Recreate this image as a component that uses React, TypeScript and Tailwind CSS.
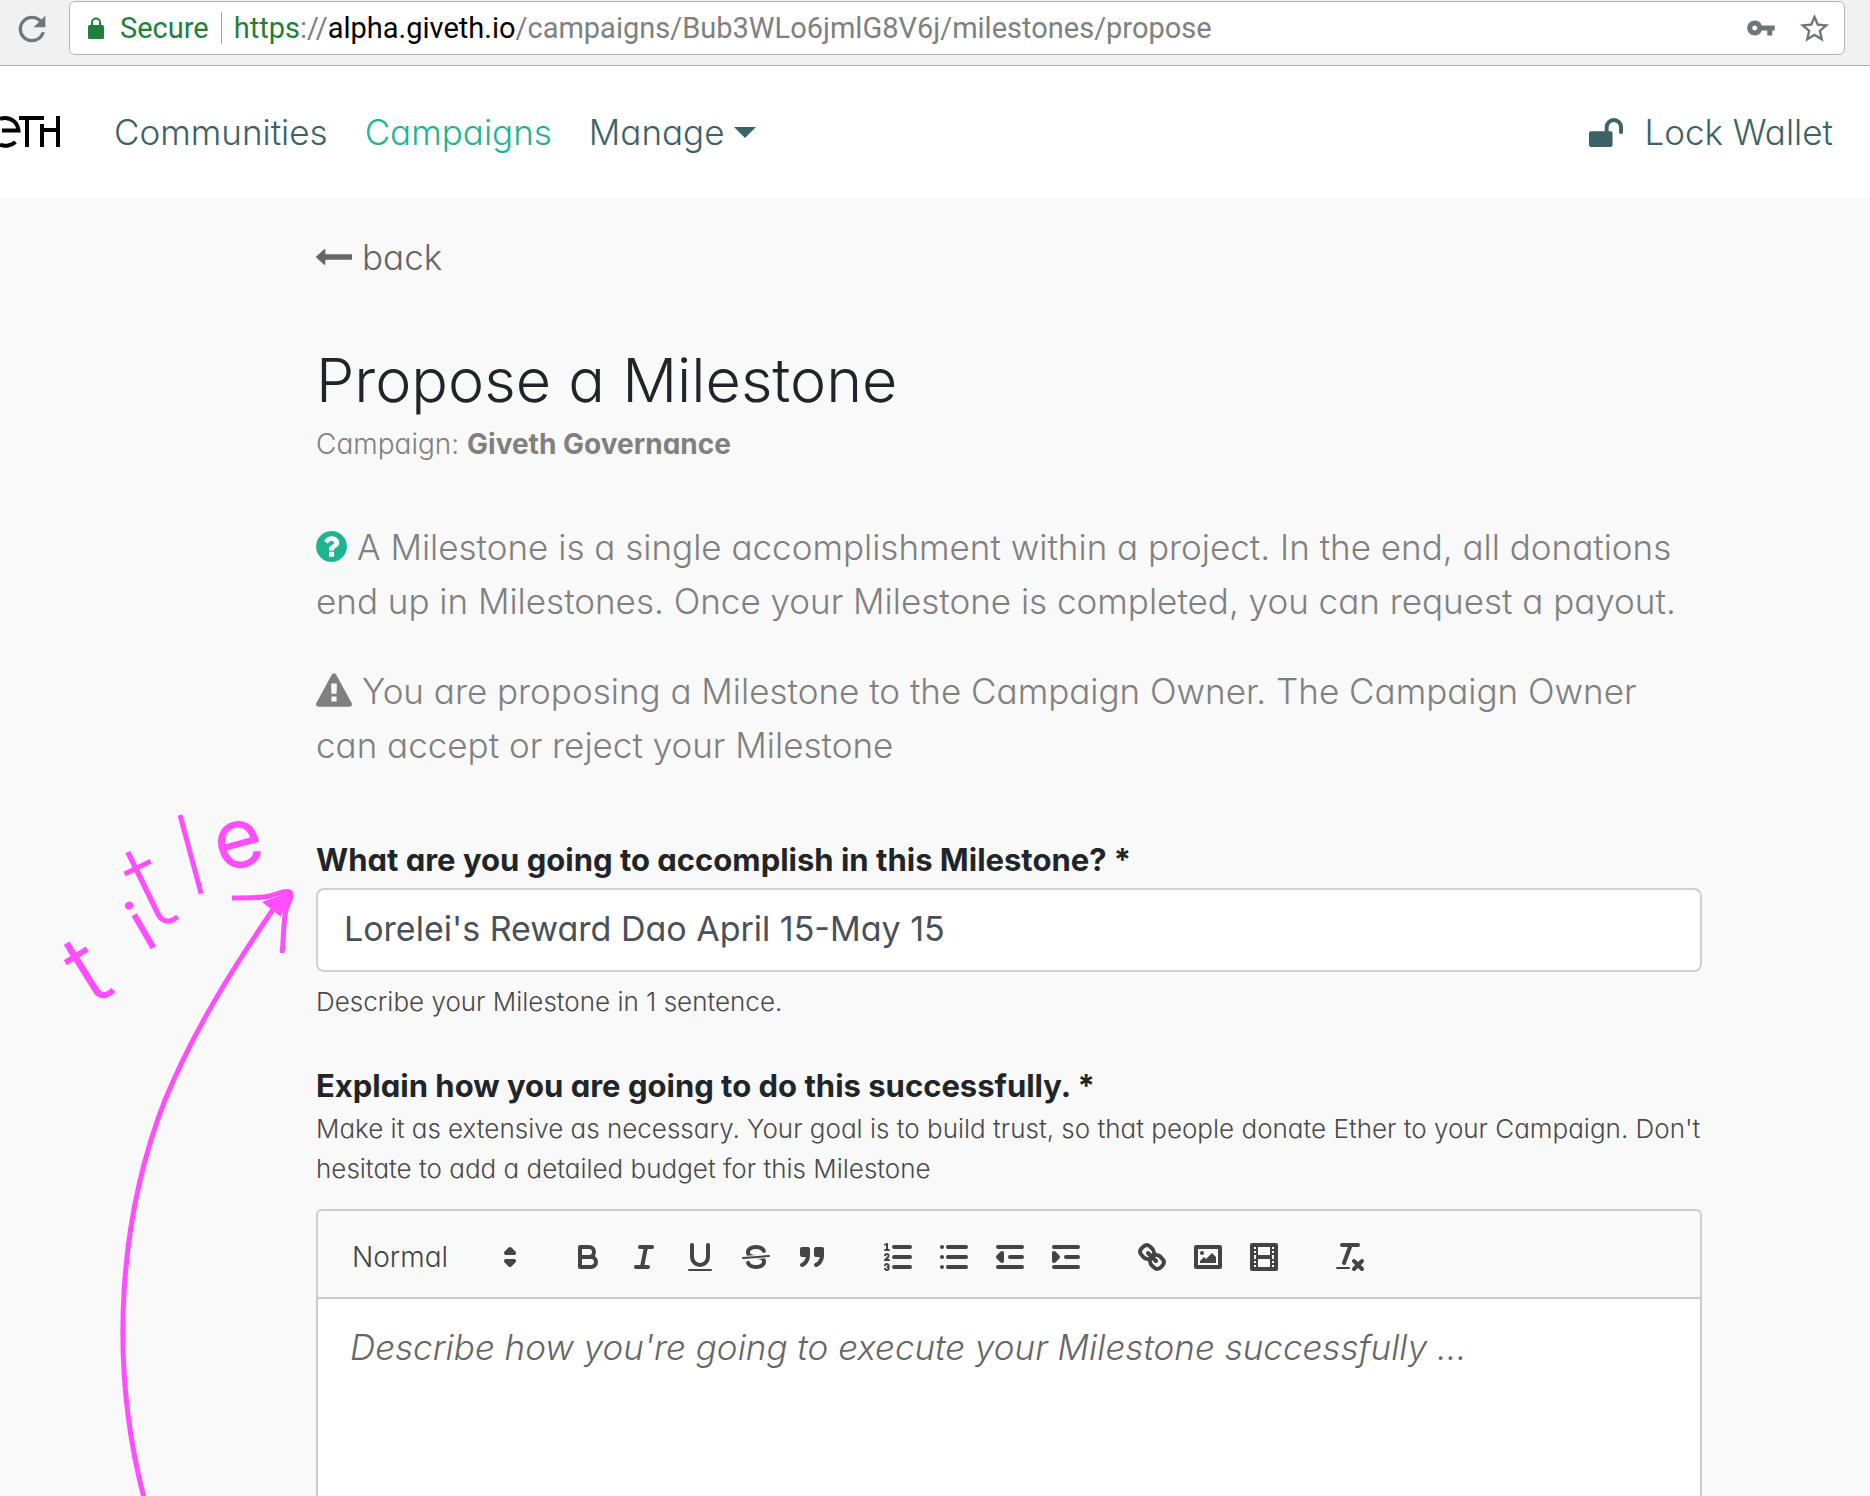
import type { ReactNode } from "react";
import { MdRefresh, MdStarBorder, MdVpnKey } from "react-icons/md";

function BrowserBar() {
  return (
    <div className="flex h-[66px] items-start border-b border-[#b0b0b0] bg-[#f1f1f1] pt-px pr-[25px] pl-3">
      <button aria-label="Reload" className="mt-2 text-[#70757a]">
        <MdRefresh size={40} />
      </button>
      <div className="ml-[17px] flex h-[54px] flex-1 items-center rounded-md border border-[#b4b4b4] bg-white pr-3 pl-[18px] font-['Roboto','Liberation_Sans',sans-serif] text-[29px] whitespace-nowrap">
        <svg viewBox="0 0 16 22" className="h-[22px] w-4" aria-hidden="true">
          <path d="M4 10V5.500A4 4 0 0 1 12 5.500V10" fill="none" stroke="#1f803b" strokeWidth="2" />
          <rect y="8" width="16" height="14" rx="1.500" fill="#1f803b" />
        </svg>
        <span className="ml-4 pt-[2px] text-[#1f803b]">Secure</span>
        <span className="mr-3 ml-3 h-8 w-px bg-[#a5a5a5]" />
        <span className="pt-[2px] text-[#808080]">
          <span className="text-[#1f803b]">https</span>://<span className="text-black">alpha.giveth.io</span>
          /campaigns/Bub3WLo6jmlG8V6j/milestones/propose
        </span>
        <button aria-label="Saved passwords" className="ml-auto text-[#70757a]">
          <MdVpnKey size={30} />
        </button>
        <button aria-label="Bookmark this page" className="ml-[21px] text-[#70757a]">
          <MdStarBorder size={35} />
        </button>
      </div>
    </div>
  );
}

function Logo() {
  return (
    <svg viewBox="0 0 62 34" className="h-[34px] w-[62px]" role="img" aria-label="Giveth">
      <path d="M2 15.5H18.5C17.500 7 11 3 5 3C3 3 1 3.500 0 4M0 29.500C5 32 11.500 30.500 15.500 27" fill="none" stroke="#000" strokeWidth="4" />
      <rect x="19" y="1" width="25" height="4" />
      <rect x="25" y="1" width="4" height="31" />
      <rect x="40" y="9" width="4" height="23" />
      <rect x="40" y="13" width="20" height="4" />
      <rect x="56" y="1" width="4" height="31" />
    </svg>
  );
}

function NavBar() {
  return (
    <nav className="flex h-[132px] items-center bg-white pr-[37px] text-[35px] font-[350] text-[#3d6266]">
      <a href="#home">
        <Logo />
      </a>
      <div className="ml-[52px] flex gap-[37px]">
        <a href="#communities">Communities</a>
        <a href="#campaigns" className="text-[#1eb492]">
          Campaigns
        </a>
        <button className="flex items-center gap-[10px]">
          Manage
          <span className="border-x-[11px] border-t-[11px] border-x-transparent border-t-[#3d6266]" />
        </button>
      </div>
      <button className="ml-auto flex items-center gap-[21px]">
        <svg viewBox="64 128 1664 1408" className="h-[29px] w-[34px] fill-current" aria-hidden="true">
          <path d="M1728 576v256q0 26-19 45t-45 19h-64q-26 0-45-19t-19-45v-256q0-106-75-181t-181-75-181 75-75 181v192h96q40 0 68 28t28 68v576q0 40-28 68t-68 28h-960q-40 0-68-28t-28-68v-576q0-40 28-68t68-28h672v-192q0-185 131.500-316.500t316.500-131.500 316.500 131.500 131.500 316.500z" />
        </svg>
        Lock Wallet
      </button>
    </nav>
  );
}

function Tool({ label, children }: { label: string; children: ReactNode }) {
  return (
    <button aria-label={label} className="flex h-12 w-14 items-center justify-center">
      <svg viewBox="0 0 18 18" className="size-9 fill-none stroke-[#444] stroke-2" strokeLinecap="round" strokeLinejoin="round">
        {children}
      </svg>
    </button>
  );
}

const solid = "fill-[#444] stroke-none";
const both = "fill-[#444]";
const thin = "stroke-1";

function Toolbar() {
  return (
    <div className="flex gap-[30px] border-b-2 border-[#ccc] px-4 pt-[22px] pb-4">
      <button aria-label="Text style" className="flex h-12 w-[196px] items-center justify-between pl-[18px] text-[28px] font-[350] text-[#444]">
        Normal
        <svg viewBox="0 0 18 18" className="mr-[2px] size-9 fill-[#444] stroke-[#444] stroke-2" strokeLinejoin="round">
          <polygon points="7 11 9 13 11 11 7 11" />
          <polygon points="7 7 9 5 11 7 7 7" />
        </svg>
      </button>
      <div className="flex">
        <Tool label="Bold">
          <path d="M5,4H9.5A2.5,2.5,0,0,1,12,6.5v0A2.5,2.5,0,0,1,9.5,9H5V4Z" />
          <path d="M5,9h5.500A2.500,2.500,0,0,1,13,11.500v0A2.500,2.500,0,0,1,10.500,14H5V9Z" />
        </Tool>
        <Tool label="Italic">
          <path d="M7 4H13M5 14H11M8 14L10 4" />
        </Tool>
        <Tool label="Underline">
          <path d="M5,3V9a4.012,4.012,0,0,0,4,4H9a4.012,4.012,0,0,0,4-4V3" />
          <rect className={solid} x="3" y="15" width="12" height="1" rx="0.5" />
        </Tool>
        <Tool label="Strike">
          <path className={thin} d="M15.5 8.5L2.5 9.5" />
          <path className={solid} d="M9.007,8C6.542,7.791,6,7.519,6,6.5,6,5.792,7.283,5,9,5c1.571,0,2.765.679,2.969,1.309a1,1,0,0,0,1.9-.617C13.356,4.106,11.354,3,9,3,6.2,3,4,4.538,4,6.5a3.2,3.2,0,0,0,.5,1.843Z" />
          <path className={solid} d="M8.984,10C11.457,10.208,12,10.479,12,11.5c0,.708-1.283,1.5-3,1.5-1.571,0-2.765-.679-2.969-1.309a1,1,0,1,0-1.9.617C4.644,13.894,6.646,15,9,15c2.8,0,5-1.538,5-3.5a3.2,3.2,0,0,0-.5-1.843Z" />
        </Tool>
        <Tool label="Quote">
          <rect className={both} x="4" y="5" width="3" height="3" />
          <rect className={both} x="11" y="5" width="3" height="3" />
          <path className={both} fillRule="evenodd" d="M7,8c0,4.031-3,5-3,5" />
          <path className={both} fillRule="evenodd" d="M14,8c0,4.031-3,5-3,5" />
        </Tool>
      </div>
      <div className="flex">
        <Tool label="Numbered list">
          <path d="M7 4H15M7 9H15M7 14H15" />
          <path className={thin} d="M2.5 5.5H4.5" />
          <path className={solid} d="M3.5,6A0.5,0.5,0,0,1,3,5.5V3.085l-0.276.138A0.5,0.5,0,0,1,2.053,3c-0.124-.247-0.023-0.324.224-0.447l1-.5A0.5,0.5,0,0,1,4,2.5v3A0.5,0.5,0,0,1,3.5,6Z" />
          <path className={thin} d="M4.5,10.5h-2c0-.234,1.85-1.076,1.85-2.234A0.959,0.959,0,0,0,2.5,8.156" />
          <path className={thin} d="M2.5,14.846a0.959,0.959,0,0,0,1.85-.109A0.7,0.7,0,0,0,3.75,14a0.688,0.688,0,0,0,.6-0.736,0.959,0.959,0,0,0-1.85-.109" />
        </Tool>
        <Tool label="Bullet list">
          <path d="M6 4H15M6 9H15M6 14H15M3 4H3M3 9H3M3 14H3" />
        </Tool>
        <Tool label="Decrease indent">
          <path d="M3 14H15M3 4H15M9 9H15" />
          <polygon className={both} points="5 7 5 11 3 9 5 7" />
        </Tool>
        <Tool label="Increase indent">
          <path d="M3 14H15M3 4H15M9 9H15" />
          <polygon className={both} points="3 7 3 11 5 9 3 7" />
        </Tool>
      </div>
      <div className="flex">
        <Tool label="Link">
          <path d="M7 7L11 11" />
          <path d="M8.900,4.577a3.476,3.476,0,0,1,.360,4.679A3.476,3.476,0,0,1,4.577,8.900C3.185,7.500,2.035,6.400,4.217,4.217S7.500,3.185,8.900,4.577Z" />
          <path d="M13.423,9.100a3.476,3.476,0,0,0-4.679-.360,3.476,3.476,0,0,0,.360,4.679c1.392,1.392,2.500,2.542,4.679.360S14.815,10.500,13.423,9.100Z" />
        </Tool>
        <Tool label="Image">
          <rect x="3" y="4" width="12" height="10" />
          <circle className={solid} cx="6" cy="7" r="1" />
          <polygon className={solid} points="5 12 5 11 7 9 8 10 11 7 13 9 13 12 5 12" />
        </Tool>
        <Tool label="Video">
          <rect x="3" y="3" width="12" height="12" />
          <path className={solid} d="M5 3h1v12h-1zM12 3h1v12h-1zM5 8h8v2h-8zM3 5h3v1h-3zM3 7h3v1h-3zM3 10h3v1h-3zM3 12h3v1h-3zM12 5h3v1h-3zM12 7h3v1h-3zM12 10h3v1h-3zM12 12h3v1h-3z" />
        </Tool>
      </div>
      <Tool label="Clear formatting">
        <path d="M5 3H13M6 12L9.35 3M11 11L15 15M15 11L11 15" />
        <rect className={solid} x="2" y="14" width="7" height="1" rx="0.5" />
      </Tool>
    </div>
  );
}

function Annotation() {
  return (
    <svg viewBox="0 750 320 750" className="pointer-events-none absolute top-[750px] left-0 h-[750px] w-80 overflow-visible" fill="none" stroke="#ff4dff">
      <text className="fill-[#ff4dff] stroke-none font-light">
        <tspan x="92" y="1007" rotate="-32" fontSize="100">t</tspan>
        <tspan x="146" y="952" rotate="-30" fontSize="70" className="font-normal">i</tspan>
        <tspan x="152" y="932" rotate="-26" fontSize="122" className="font-extralight">t</tspan>
        <tspan x="189" y="897" rotate="-15" fontSize="112" className="font-extralight">l</tspan>
        <tspan x="221" y="873" rotate="-15" fontSize="84" className="font-normal">e</tspan>
      </text>
      <path strokeWidth="5" d="M274 908C225 980 192 1035 165 1100C120 1215 108 1360 144 1498" />
      <path strokeWidth="5" d="M232 898C250 898 262 898 270 896C279 893 287 890 290 892C293 896 288 903 286 910C283 922 284 938 282 953" />
      <path className="fill-[#ff4dff] stroke-none" d="M290 892L262 902L281 917Z" />
    </svg>
  );
}

export default function App() {
  return (
    <div className="relative flex min-h-screen flex-col overflow-hidden bg-[#f9f9f9] font-['Inter','Liberation_Sans',sans-serif] [font-feature-settings:'cv11']">
      <BrowserBar />
      <NavBar />
      <main className="flex flex-1 flex-col pr-[168px] pl-[316px]">
        <a href="#back" className="mt-8 flex items-center gap-[10px] text-[35px] leading-[54px] font-[350] text-[#666]">
          <svg viewBox="64 512 1728 768" className="h-[16px] w-[36px] fill-current" aria-hidden="true">
            <path d="M1792 800v192q0 14-9 23t-23 9h-1248v224q0 21-19 29t-35-5l-384-350q-10-10-10-23 0-14 10-24l384-354q16-14 35-6 19 9 19 29v224h1248q14 0 23 9t9 23z" />
          </svg>
          back
        </a>
        <h1 className="mt-[58px] text-[61px] leading-[76px] font-[350] text-[#212529]">Propose a Milestone</h1>
        <p className="mt-1 text-[28px] leading-[44px] font-[350] text-[#808080]">
          Campaign: <strong className="font-bold">Giveth Governance</strong>
        </p>
        <p className="mt-[54px] text-[35px] leading-[54px] font-[350] text-[#808080]">
          <svg viewBox="128 128 1536 1536" className="mr-[10px] inline size-[31px] align-[-2px] fill-[#1eb492]" aria-hidden="true">
            <path d="M1024 1376v-192q0-14-9-23t-23-9h-192q-14 0-23 9t-9 23v192q0 14 9 23t23 9h192q14 0 23-9t9-23zm256-672q0-88-55.5-163t-138.5-116-170-41q-243 0-371 213-15 24 8 42l132 100q7 6 19 6 16 0 25-12 53-68 86-92 34-24 86-24 48 0 85.5 26t37.5 59q0 38-20 61t-68 45q-63 28-115.5 86.5t-52.5 125.5v36q0 14 9 23t23 9h192q14 0 23-9t9-23q0-19 21.5-49.5t54.5-49.5q32-18 49-28.5t46-35 44.5-48 28-60.5 12.5-81zm384 192q0 209-103 385.5t-279.5 279.5-385.5 103-385.5-103-279.5-279.5-103-385.5 103-385.5 279.5-279.5 385.5-103 385.5 103 279.5 279.5 103 385.5z" />
          </svg>
          A Milestone is a single accomplishment within a project. In the end, all donations
          end up in Milestones. Once your Milestone is completed, you can request a payout.
        </p>
        <p className="mt-9 text-[35px] leading-[54px] font-[350] text-[#808080]">
          <svg viewBox="0 0 1792 1664" className="mr-[10px] inline h-[34px] w-[36px] align-[-3px] fill-current" aria-hidden="true">
            <path d="M1024 1375v-190q0-14-9.5-23.5t-22.5-9.5h-192q-13 0-22.5 9.5t-9.5 23.5v190q0 14 9.5 23.5t22.5 9.5h192q13 0 22.5-9.5t9.5-23.5zm-2-374l18-459q0-12-10-19-13-11-24-11h-220q-11 0-24 11-10 7-10 21l17 457q0 10 10 16.5t24 6.5h185q14 0 23.5-6.5t10.5-16.5zm-14-934l768 1408q35 63-2 126-17 29-46.5 46t-63.5 17h-1536q-34 0-63.5-17t-46.5-46q-37-63-2-126l768-1408q17-31 47-49t65-18 65 18 47 49z" />
          </svg>
          You are proposing a Milestone to the Campaign Owner. The Campaign Owner can accept or reject your Milestone
        </p>
        <label htmlFor="title" className="mt-16 text-[31px] leading-[48px] font-bold text-[#212529]">
          What are you going to accomplish in this Milestone? *
        </label>
        <input
          id="title"
          defaultValue="Lorelei's Reward Dao April 15-May 15"
          className="mt-1 h-[84px] w-full rounded-lg border-2 border-[#d0d0d0] bg-white px-[26px] pb-1 text-[34px] font-normal text-[#495057]"
        />
        <p className="mt-[10px] text-[26px] leading-10 font-light text-[#4a4a4a]">Describe your Milestone in 1 sentence.</p>
        <label id="description" htmlFor="details" className="mt-[41px] text-[31px] leading-[46px] font-bold text-[#212529]">
          Explain how you are going to do this successfully. *
        </label>
        <p className="text-[26px] leading-10 font-light text-[#4a4a4a]">
          Make it as extensive as necessary. Your goal is to build trust, so that people donate Ether to your Campaign. Don't
          hesitate to add a detailed budget for this Milestone
        </p>
        <div className="mt-5 flex flex-1 flex-col rounded-t-md border-2 border-b-0 border-[#ccc]">
          <Toolbar />
          <textarea
            id="details"
            placeholder="Describe how you're going to execute your Milestone successfully ..."
            className="min-h-0 w-full flex-1 resize-none bg-white px-8 py-[21px] text-[35px] leading-[54px] font-light placeholder:text-[#666] placeholder:italic"
          />
        </div>
      </main>
      <Annotation />
    </div>
  );
}
